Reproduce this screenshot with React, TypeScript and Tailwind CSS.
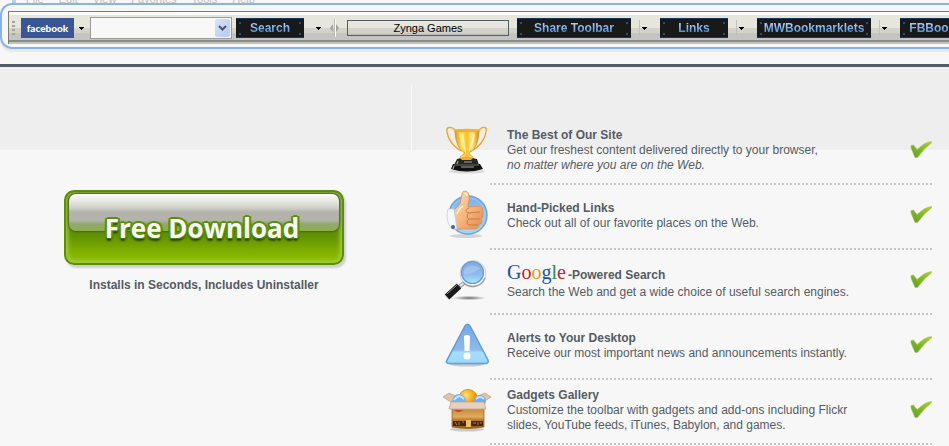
import type { ReactNode } from "react";

const menuItems = ["File", "Edit", "View", "Favorites", "Tools", "Help"];

const logoLetters = [
  { char: "G", color: "text-[#1b52b5]" },
  { char: "o", color: "text-[#c4242b]" },
  { char: "o", color: "text-[#dfa010]" },
  { char: "g", color: "text-[#1b52b5]" },
  { char: "l", color: "text-[#2d8a35]" },
  { char: "e", color: "text-[#c4242b]" },
];

function TrophyIcon() {
  return (
    <svg width="50" height="50" viewBox="0 0 50 50" aria-hidden="true">
      <defs>
        <linearGradient id="cup" x1="0" x2="1">
          <stop offset="0" stopColor="#e79a10" />
          <stop offset="0.3" stopColor="#ffe25a" />
          <stop offset="0.5" stopColor="#fbc02a" />
          <stop offset="0.72" stopColor="#ffe88a" />
          <stop offset="1" stopColor="#d98a0c" />
        </linearGradient>
      </defs>
      <ellipse cx="25" cy="46.500" rx="18" ry="2" fill="#d9d9d9" />
      <path d="M14 7 C11 2 5 1 5 5 C6 14 10 21 20 26 M36 7 C39 2 45 1 44 5 C43 14 39 21 29 26" fill="none" stroke="#e3a63c" strokeWidth="1.800" />
      <path d="M13 6 C10 3 6 2 6 6 C7 13 11 20 19 24 M37 6 C40 3 44 2 43 6 C42 13 38 20 30 24" fill="none" stroke="#fff0c5" strokeWidth="0.9" />
      <path d="M13 5 H37 C37 15 34 24 28 27 L27 29 L31 32 V35 H18 V32 L22 29 V27 C16 24 13 15 13 5Z" fill="url(#cup)" stroke="#d78d14" strokeWidth="0.7" />
      <ellipse cx="25" cy="5.500" rx="12.500" ry="1.700" fill="#f3b32a" />
      <path d="M17 8 C18 17 20 22 23 26 L24 29 C24 20 22 14 21 8Z" fill="#fff1a5" opacity="0.75" />
      <path d="M32 9 C31 17 29 22 27 25" fill="none" stroke="#fff6c9" strokeWidth="1.500" />
      <path d="M15 34 Q25 31 35 34 L37 40 H12Z" fill="#262626" />
      <path d="M18 33 Q25 30 31 33 L29 35 H20Z" fill="#f0ae27" />
      <path d="M11 39 H38 L41 44 Q25 49 9 44Z" fill="#111" />
      <path d="M16 36 L15 39 M12 41 L11 44 M19 42 H32 M22 37 H30" stroke="#a5a5a5" strokeWidth="1.200" />
      <path d="M12 40 H37" stroke="#777" />
    </svg>
  );
}

function ThumbIcon() {
  return (
    <svg width="50" height="50" viewBox="0 0 50 50" aria-hidden="true">
      <defs>
        <linearGradient id="disc" x1="0" y1="0" x2="0" y2="1">
          <stop offset="0" stopColor="#7faee6" />
          <stop offset="1" stopColor="#a9e0fb" />
        </linearGradient>
        <linearGradient id="skin" x1="0" y1="0" x2="1" y2="1">
          <stop offset="0" stopColor="#ffe0b8" />
          <stop offset="0.5" stopColor="#f6b67c" />
          <stop offset="1" stopColor="#df8c50" />
        </linearGradient>
      </defs>
      <ellipse cx="24" cy="46" rx="16" ry="2" fill="#d4d4d4" />
      <circle cx="26" cy="25" r="19" fill="url(#disc)" stroke="#6fa4df" strokeWidth="1.500" />
      <circle cx="26" cy="25" r="17" fill="none" stroke="#9fcaf2" strokeWidth="1" />
      <path d="M12 20 L18 14 L20 4 C20 0 26 0 27 5 C28 11 26 13 26 17 L38 16 C41 17 41 21 40 22 C42 24 41 28 39 29 C41 31 40 34 37 35 C37 38 34 39 31 39 H15 L12 36Z" fill="url(#skin)" stroke="#d78b55" strokeWidth="0.8" />
      <path d="M27 18 C23 19 23 23 27 23 L38 22 M38 29 H27 C24 28 25 24 27 23 M36 35 H27 C24 34 25 30 27 29" fill="none" stroke="#cb7b45" strokeWidth="1" />
      <path d="M22 4 Q24 2 25 6 M21 16 Q16 20 15 24" stroke="#fff0d8" strokeWidth="1.500" fill="none" />
      <path d="M6 19 L12 19 L15 39 L10 39 C5 34 4 25 6 19Z" fill="#f4f8fd" stroke="#b9cfe7" strokeWidth="0.8" />
      <circle cx="11" cy="37" r="2" fill="#4f6080" />
    </svg>
  );
}

function MagnifierIcon() {
  return (
    <svg width="50" height="50" viewBox="0 0 50 50" aria-hidden="true">
      <defs>
        <linearGradient id="lens" x1="0" y1="0" x2="0" y2="1">
          <stop offset="0" stopColor="#7fa9e0" />
          <stop offset="0.6" stopColor="#8fbcec" />
          <stop offset="1" stopColor="#a8ecfb" />
        </linearGradient>
        <radialGradient id="lensShadow">
          <stop offset="0" stopColor="#6d6d6d" />
          <stop offset="1" stopColor="#f7f7f7" />
        </radialGradient>
      </defs>
      <ellipse cx="27" cy="43" rx="17" ry="2.200" fill="url(#lensShadow)" />
      <path d="M17 32 L23 27" stroke="#989898" strokeWidth="4" />
      <path d="M18 31 L23 27" stroke="#e7e7e7" strokeWidth="2" />
      <path d="M5 42 L17 31" stroke="#191919" strokeWidth="6.500" />
      <path d="M5 39 L16 29" stroke="#8a8a8a" strokeWidth="1" />
      <circle cx="31" cy="18.500" r="13" fill="#f1f1ef" stroke="#d2d2cf" strokeWidth="1" />
      <path d="M21 27 A13 13 0 0 0 43 23" fill="none" stroke="#9b9b9b" strokeWidth="1.300" />
      <circle cx="30.500" cy="17.500" r="11" fill="url(#lens)" stroke="#6699d6" strokeWidth="1.200" />
      <path d="M22 15 Q28 7 38 13 Q32 19 22 19Z" fill="#c0daf5" opacity="0.400" />
    </svg>
  );
}

function AlertIcon() {
  return (
    <svg width="50" height="50" viewBox="0 0 50 50" aria-hidden="true">
      <defs>
        <linearGradient id="tri" x1="0" y1="0" x2="0" y2="1">
          <stop offset="0" stopColor="#79a6df" />
          <stop offset="0.65" stopColor="#8dbaea" />
          <stop offset="0.72" stopColor="#a7dcfa" />
          <stop offset="1" stopColor="#9ad9fa" />
        </linearGradient>
      </defs>
      <ellipse cx="25" cy="44.500" rx="17" ry="2" fill="#c9c9c9" />
      <path d="M23 6 Q25.500 2.500 28 6 L46 40 Q47 43 44 43.500 H7 Q3 43 5 40Z" fill="url(#tri)" stroke="#649cd9" strokeWidth="1.500" />
      <path d="M22 16 Q25 14 28 16 L27.500 31 H22.500Z" fill="#fff" />
      <circle cx="25" cy="36" r="3.500" fill="#fff" />
    </svg>
  );
}

function GadgetsIcon() {
  return (
    <svg width="50" height="50" viewBox="0 0 50 50" aria-hidden="true">
      <defs>
        <linearGradient id="box" x1="0" y1="0" x2="0" y2="1">
          <stop offset="0" stopColor="#bd8134" />
          <stop offset="0.450" stopColor="#dfac5b" />
          <stop offset="0.600" stopColor="#bb7a2c" />
          <stop offset="1" stopColor="#9d5d18" />
        </linearGradient>
        <radialGradient id="orange" cx="0.400" cy="0.300">
          <stop offset="0" stopColor="#ffe56c" />
          <stop offset="1" stopColor="#f19110" />
        </radialGradient>
      </defs>
      <ellipse cx="25" cy="44.500" rx="17" ry="2" fill="#cacaca" />
      <path d="M1 12 L7 8 L14 11 L9 17Z M49 12 L43 8 L36 11 L41 17Z" fill="#e2c3a3" stroke="#bd9d7d" strokeWidth="0.7" />
      <circle cx="26" cy="14" r="9.500" fill="url(#orange)" stroke="#e98e10" />
      <circle cx="17" cy="16" r="7" fill="#75b5ed" />
      <circle cx="38" cy="16" r="6" fill="#69adeb" />
      <path d="M12 15 Q17 8 22 14 M34 14 Q38 10 42 14" stroke="#c6e5fb" strokeWidth="2" fill="none" />
      <path d="M10 22 H42 V42 Q26 45 10 42Z" fill="url(#box)" stroke="#92591b" strokeWidth="0.700" />
      <path d="M9 17 H42 L44 24 H7Z" fill="#e7d0c1" stroke="#c3a284" strokeWidth="0.800" />
      <path d="M12 25 Q16 29 21 25Z" fill="#c64134" />
      <path d="M11 36 H41 V41 H11Z" fill="#402711" />
      <path d="M13 37 L15 40 M17 37 V40 M20 37 H22 M31 38 H34 M36 37 V40 M38 38 H40" stroke="#b7833c" strokeWidth="1" />
      <path d="M24 35 H29 V42 H24Z" fill="#ebc365" />
    </svg>
  );
}

function CheckIcon() {
  return (
    <svg width="22" height="18" viewBox="0 0 22 18" className="shrink-0" role="img" aria-label="Included">
      <defs>
        <linearGradient id="check" x1="0" y1="1" x2="1" y2="0">
          <stop offset="0" stopColor="#5f9d25" />
          <stop offset="1" stopColor="#a9d326" />
        </linearGradient>
      </defs>
      <path d="M1 4.500 L3.500 4 L7 8.500 L14 3 Q17 1 21.500 0.500 L21.500 2 L15 7.500 L7.500 16.500 H5 L1 7Z" fill="url(#check)" stroke="#a4c46c" strokeWidth="0.600" />
    </svg>
  );
}

function Caret({ label }: { label: string }) {
  return (
    <button type="button" aria-label={label} className="flex h-5 w-[6px] shrink-0 items-center">
      <svg width="5" height="3" viewBox="0 0 5 3" shapeRendering="crispEdges">
        <path d="M0 0H5V1H4V2H3V3H2V2H1V1H0Z" fill="#000" />
      </svg>
    </button>
  );
}

function NeonButton({ children, className }: { children: ReactNode; className: string }) {
  return (
    <button type="button" className={`relative h-5 shrink-0 border-y border-[#16365e] bg-[#191919] ${className}`}>
      <svg className="absolute inset-0 h-full w-full" aria-hidden="true">
        <path d="M3 3H5V5H3Z M3 14H5V16H3Z" fill="#17518a" />
        <svg x="100%" width="8" height="18" overflow="visible">
          <path d="M-5 3H-3V5H-5Z M-5 14H-3V16H-5Z" fill="#17518a" />
        </svg>
      </svg>
      <span className="relative block bg-gradient-to-b from-[#a9c9f2] from-30% to-[#1682df] to-80% bg-clip-text text-center text-[12px] leading-[19px] font-bold whitespace-nowrap text-transparent">
        {children}
      </span>
    </button>
  );
}

function MenuSplit({ label }: { label: string }) {
  return (
    <div className="mr-[12px] ml-2 flex shrink-0 items-center gap-[2px]">
      <span className="h-4 w-px bg-[#c0c0bc]" />
      <Caret label={label} />
    </div>
  );
}

function Toolbar() {
  return (
    <header className="overflow-hidden pb-3">
      <nav className="flex h-[3px] items-end pl-3 font-['Liberation_Sans',sans-serif] text-[11px] leading-[7px] text-[#c4beb5]">
        <span className="mr-[10px] h-[3px] w-1 bg-[#b5cef0]" />
        <div className="flex gap-[15px]">
          {menuItems.map((item) => (
            <a key={item} href="#">{item}</a>
          ))}
        </div>
      </nav>
      <div className="relative h-[46px] rounded-l-[12px] border-2 border-r-0 border-[#86b3ec] bg-[#f7f7f7] py-[6px] pl-[6px] shadow-[0_3px_1px_#e9e9e2]">
        <div className="flex h-[33px] items-start overflow-hidden border-t border-l border-[#7d7c75] bg-[linear-gradient(#fdfdfb_0_3px,#e6e6dc_3px_16px,#d3d3cb_16px_21px,#c4c4c4_21px_28px,#858b89_28px_30px,#c4c4b9_30px)] pt-[6px]">
          <span className="mt-[3px] mr-[6px] ml-[3px] h-[15px] w-[3px] shrink-0 bg-[repeating-linear-gradient(#a5a59e_0_2px,transparent_2px_4px)]" />
          <button type="button" className="h-5 w-[53px] shrink-0 bg-[#3a5593] text-center font-['Lato',sans-serif] text-[10px] leading-5 font-black text-white">
            facebook
          </button>
          <div className="mx-[5px]"><Caret label="Facebook menu" /></div>
          <div className="-mt-px flex h-[22px] w-[142px] shrink-0 border border-[#9a9a96] bg-[#f8f8f8] p-px">
            <input type="text" aria-label="Search the Web" className="min-w-0 flex-1 bg-transparent px-1 text-[12px] outline-none" />
            <button type="button" aria-label="Search history" className="flex h-[18px] w-[15px] items-center justify-center rounded-[2px] bg-gradient-to-br from-[#d5e3fc] to-[#b4caf5]">
              <svg width="9" height="7" viewBox="0 0 9 7"><path d="M1 1L4.500 4.500L8 1" fill="none" stroke="#48556c" strokeWidth="2" /></svg>
            </button>
          </div>
          <NeonButton className="ml-1 w-[68px]">Search</NeonButton>
          <div className="mr-2 ml-3"><Caret label="Search engines" /></div>
          <svg width="9" height="20" viewBox="0 0 9 20" className="shrink-0" aria-hidden="true">
            <path d="M4 1H5V19H4Z" fill="#b7b7b0" />
            <path d="M5 1H6V19H5Z" fill="#fff" />
            <path d="M3 6V14L0 10Z M6 6V14L9 10Z" fill="#a2a29d" />
          </svg>
          <button type="button" className="mx-2 mt-[2px] h-4 w-[162px] shrink-0 border border-[#545e68] text-center text-[11px] leading-[14px] text-black">
            Zynga Games
          </button>
          <NeonButton className="w-[114px]">Share Toolbar</NeonButton>
          <MenuSplit label="Share menu" />
          <NeonButton className="w-[68px]">Links</NeonButton>
          <MenuSplit label="Links menu" />
          <NeonButton className="w-[114px]">MWBookmarklets</NeonButton>
          <MenuSplit label="MWBookmarklets menu" />
          <NeonButton className="w-[114px]">FBBookmarklets</NeonButton>
        </div>
      </div>
    </header>
  );
}

const features = [
  {
    icon: <TrophyIcon />,
    title: "The Best of Our Site",
    body: <>Get our freshest content delivered directly to your browser,<br /><em>no matter where you are on the Web.</em></>,
  },
  {
    icon: <ThumbIcon />,
    title: "Hand-Picked Links",
    body: "Check out all of our favorite places on the Web.",
  },
  {
    icon: <MagnifierIcon />,
    logo: true,
    title: "-Powered Search",
    body: "Search the Web and get a wide choice of useful search engines.",
  },
  {
    icon: <AlertIcon />,
    title: "Alerts to Your Desktop",
    body: "Receive our most important news and announcements instantly.",
  },
  {
    icon: <GadgetsIcon />,
    title: "Gadgets Gallery",
    body: "Customize the toolbar with gadgets and add-ons including Flickr slides, YouTube feeds, iTunes, Babylon, and games.",
  },
];

function GoogleLogo() {
  return (
    <span className="mr-[2px] font-['Liberation_Serif',serif] text-[20px] leading-none font-normal">
      {logoLetters.map((letter, idx) => (
        <span key={idx} className={letter.color}>{letter.char}</span>
      ))}
    </span>
  );
}

function DownloadPanel() {
  return (
    <section className="flex w-[411px] shrink-0 flex-col items-center pt-[123px] pr-[3px]">
      <button type="button" className="relative h-[75px] w-[280px] rounded-[10px] border-2 border-[#5b8f0a] bg-[linear-gradient(#4c6a1c_0,#5b8a0c_36px,#619300_44px,#6e9f00_51px,#7eac00_58px,#8fc000_70px)] pr-1 shadow-[2px_3px_2px_#cfcfcf,inset_0_0_4px_2px_#a5cf48]">
        <span className="absolute inset-x-[3px] top-[2px] h-[37px] rounded-[7px] bg-[linear-gradient(#fbfbfb_0,#e4e4df_8px,#cfcfc9_14px,#b3b3ab_18px,#b3b3ab_26px,#93a771_30px,#8bb046_37px)] shadow-[0_0_2px_1px_#4b5b35]" />
        <span className="relative font-['Open_Sans',sans-serif] text-[26px] leading-[70px] font-bold text-[#f8f8f8] [text-shadow:-2px_-1px_0_#5b8f0a,2px_-1px_0_#5b8f0a,0_-2px_0_#5b8f0a,-2px_1px_0_#4f7d08,2px_1px_0_#4f7d08,0_2px_1px_#304b08,0_3px_2px_#304b08]">
          Free Download
        </span>
      </button>
      <p className="mt-[13px] text-[12px] leading-[15px] font-bold">Installs in Seconds, Includes Uninstaller</p>
    </section>
  );
}

function App() {
  return (
    <div className="min-h-screen overflow-x-hidden bg-[#f7f7f7] font-['Liberation_Sans',Arial,sans-serif] text-[#545b65]">
      <Toolbar />
      <main className="relative mt-[3px] flex border-t-[3px] border-[#545b65]">
        {/* Grey band with the column divider */}
        <div className="absolute inset-x-0 top-0 h-[83px] bg-[#eeeeee] pt-[18px] pl-[411px]">
          <div className="h-full w-px bg-[#f9f9f9]" />
        </div>
        <div className="relative flex w-full">
          <DownloadPanel />
          <ul className="min-w-0 flex-1 pt-[53px] pr-[17px] pl-[31px]">
            {features.map((feature) => (
              <li key={feature.title}>
                <div className="flex h-[63px] items-center pb-1">
                  <div className="w-[50px] shrink-0">{feature.icon}</div>
                  <div className="mr-8 ml-[15px] min-w-0 flex-1 pt-[2px] text-[12px] leading-[15px]">
                    <h2 className={feature.logo ? "leading-5 font-bold" : "font-bold"}>
                      {feature.logo && <GoogleLogo />}
                      {feature.title}
                    </h2>
                    <p>{feature.body}</p>
                  </div>
                  <CheckIcon />
                </div>
                <div className="ml-12 h-[2px] bg-[repeating-linear-gradient(90deg,#c6c6c6_0_2px,transparent_2px_4px)]" />
              </li>
            ))}
          </ul>
        </div>
      </main>
    </div>
  );
}

export default App;
